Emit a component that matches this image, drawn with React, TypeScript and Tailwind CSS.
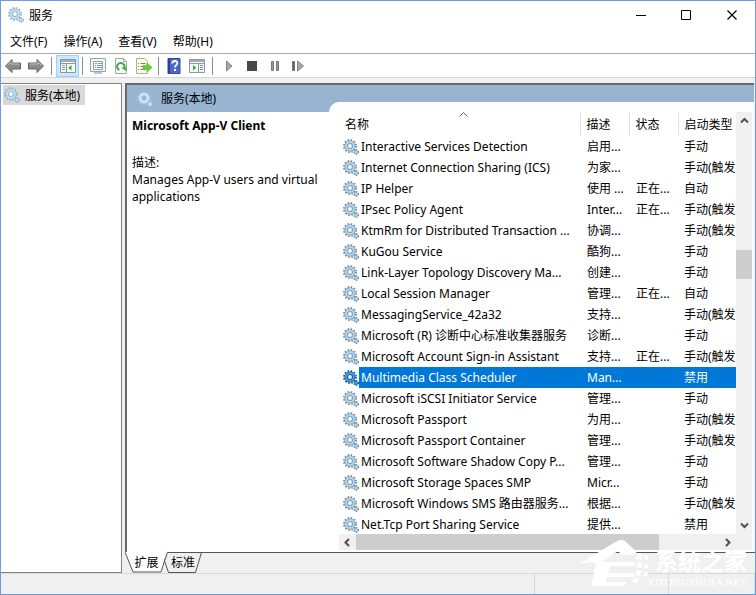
import type { ReactNode } from "react";
import clsx from "clsx";

type Service = {
  name: string;
  description: string;
  status: string;
  startup: string;
  selected?: boolean;
};

const MANUAL = "手动";
const TRIGGER = "手动(触发";
const RUNNING = "正在...";

const services: Service[] = [
  { name: "Interactive Services Detection", description: "启用...", status: "", startup: MANUAL },
  { name: "Internet Connection Sharing (ICS)", description: "为家...", status: "", startup: TRIGGER },
  { name: "IP Helper", description: "使用 ...", status: RUNNING, startup: "自动" },
  { name: "IPsec Policy Agent", description: "Inter...", status: RUNNING, startup: TRIGGER },
  { name: "KtmRm for Distributed Transaction ...", description: "协调...", status: "", startup: TRIGGER },
  { name: "KuGou Service", description: "酷狗...", status: "", startup: MANUAL },
  { name: "Link-Layer Topology Discovery Ma...", description: "创建...", status: "", startup: MANUAL },
  { name: "Local Session Manager", description: "管理...", status: RUNNING, startup: "自动" },
  { name: "MessagingService_42a32", description: "支持...", status: "", startup: TRIGGER },
  { name: "Microsoft (R) 诊断中心标准收集器服务", description: "诊断...", status: "", startup: MANUAL },
  { name: "Microsoft Account Sign-in Assistant", description: "支持...", status: RUNNING, startup: TRIGGER },
  { name: "Multimedia Class Scheduler", description: "Man...", status: "", startup: "禁用", selected: true },
  { name: "Microsoft iSCSI Initiator Service", description: "管理...", status: "", startup: MANUAL },
  { name: "Microsoft Passport", description: "为用...", status: "", startup: TRIGGER },
  { name: "Microsoft Passport Container", description: "管理...", status: "", startup: TRIGGER },
  { name: "Microsoft Software Shadow Copy P...", description: "管理...", status: "", startup: MANUAL },
  { name: "Microsoft Storage Spaces SMP", description: "Micr...", status: "", startup: MANUAL },
  { name: "Microsoft Windows SMS 路由器服务...", description: "根据...", status: "", startup: TRIGGER },
  { name: "Net.Tcp Port Sharing Service", description: "提供...", status: "", startup: "禁用" },
];

const menus = ["文件(F)", "操作(A)", "查看(V)", "帮助(H)"];

/** Big gear with a small one at its lower right */
function Gears({ className, tone = "row" }: { className?: string; tone?: "row" | "selected" | "light" | "header" }) {
  const palette = {
    row: { teeth: "#7292a8", body: "#b9d7e9", hole: "#f4fafd", edge: "#7fa3bb" },
    selected: { teeth: "#1c5c9c", body: "#4f9ad8", hole: "#e6f3fc", edge: "#2266a8" },
    light: { teeth: "#93b8ce", body: "#c9e3f1", hole: "#ffffff", edge: "#90bad2" },
    header: { teeth: "#a9c6dd", body: "#d5e8f4", hole: "#8fb0cf", edge: "#b4d0e3" },
  }[tone];
  return (
    <svg viewBox="0 0 16 16" className={clsx("size-4 shrink-0", className)} aria-hidden="true">
      <circle cx="7" cy="7" r="6" fill="none" stroke={palette.teeth} strokeWidth="2" strokeDasharray="1.570 1.570" />
      <circle cx="7" cy="7" r="5.200" fill={palette.body} stroke={palette.edge} strokeWidth=".8" />
      <circle cx="7" cy="7" r="2.500" fill={palette.hole} stroke={palette.edge} strokeWidth="1.200" />
      <circle cx="13.200" cy="13" r="2.200" fill="none" stroke={palette.teeth} strokeWidth="1.600" strokeDasharray="1.150 1.150" />
      <circle cx="13.200" cy="13" r="1.700" fill={palette.body} stroke={palette.edge} strokeWidth=".7" />
    </svg>
  );
}

function ToolButton({ label, active, children }: { label: string; active?: boolean; children: ReactNode }) {
  return (
    <button
      type="button"
      aria-label={label}
      className={clsx(
        "flex h-[22px] w-[23px] items-center justify-center",
        active && "border border-[#99d1ff] bg-[#cce8ff]"
      )}
    >
      <svg viewBox="0 0 16 16" className="size-4 shrink-0">
        {children}
      </svg>
    </button>
  );
}

function ToolSeparator({ className = "w-[7px]" }: { className?: string }) {
  return (
    <div className={clsx("flex justify-center", className)}>
      <div className="h-[18px] w-px bg-[#8c8c8c]" />
    </div>
  );
}

function Toolbar() {
  return (
    <div className="flex h-6 items-center border-b border-[#d7d7d7] bg-white pt-px">
      <ToolButton label="后退">
        <path d="M.5 8 7 1.500V5h8.500v6H7v3.500z" fill="#8a8a8a" stroke="#626262" />
        <path d="M2.300 7.600 6 3.900V6h8.500" fill="none" stroke="#bdbdbd" />
      </ToolButton>
      <ToolButton label="前进">
        <path d="M15.500 8 9 1.500V5H.5v6H9v3.500z" fill="#8a8a8a" stroke="#626262" />
        <path d="M1.500 6H10V3.900l3.500 3.500" fill="none" stroke="#bdbdbd" />
      </ToolButton>
      <ToolSeparator className="w-[9px]" />
      <ToolButton label="显示/隐藏控制台树" active>
        <path d="M.5 1.500h15v13H.5z" fill="#f6f8f9" stroke="#8d979f" />
        <path d="M1 2h14v2H1z" fill="#a3abb1" />
        <path d="M1 5.500h14M6.500 5v9" stroke="#8d979f" />
        <path d="M2 7.500h3M2 9.500h3M2 11.500h3" stroke="#8a98a4" />
        <path d="M11.500 7v5.500L8.200 9.700z" fill="#3fae30" />
      </ToolButton>
      <ToolSeparator />
      <ToolButton label="属性">
        <path d="M.5.500h15v13H.5z" fill="#f3f5f6" stroke="#9aa3a9" />
        <path d="M3.500 3.500h9v8h-9z" fill="#fff" stroke="#8ba5b8" />
        <path d="M5 5.500h2M8 5.500h4M5 7.500h1M7 7.500h5M5 9.500h1M7 9.500h5" stroke="#7b97ad" />
        <path d="M4 15h8" stroke="#a6cbe2" strokeWidth="2" />
      </ToolButton>
      <ToolButton label="刷新">
        <path d="M2.500.500h8l3 3v12h-11z" fill="#fafafa" stroke="#a5a5a5" />
        <path d="M10.500.500v3h3" fill="none" stroke="#a5a5a5" />
        <path d="M6.300 12A3.700 3.700 0 1 1 11 10.500" fill="none" stroke="#3fa744" strokeWidth="2" />
        <path d="M8 9.500h5.500v3.800z" fill="#3fa744" />
      </ToolButton>
      <ToolButton label="导出列表">
        <path d="M.5.500h8l3 3v12H.5z" fill="#fffbe9" stroke="#b5ac8d" />
        <path d="M2 5.500h1M4.500 5.500h5M2 8.500h1M4.500 8.500h3M2 11.500h1M4.500 11.500h5" stroke="#8a7f66" />
        <path d="M7 7.500h4V5l5 4.500-5 4.500v-2.500H7z" fill="#65cf35" stroke="#4fae2e" strokeWidth=".6" />
      </ToolButton>
      <ToolSeparator />
      <ToolButton label="帮助">
        <path d="M2 .500h12v15H2z" fill="#4a69cb" stroke="#3147a0" />
        <path d="M2 1h2v14H2z" fill="#2b3f96" />
        <path d="M6.300 5.500c0-3.300 5-3.300 5-.3 0 2-2.300 2-2.300 4.300" fill="none" stroke="#fff" strokeWidth="1.800" />
        <path d="M8 11h2v2H8z" fill="#fff" />
      </ToolButton>
      <ToolButton label="显示/隐藏操作窗格">
        <path d="M.5 1.500h15v13H.5z" fill="#f6f8f9" stroke="#8d979f" />
        <path d="M1 2h14v2H1z" fill="#a3abb1" />
        <path d="M1 5.500h14M9.500 5v9" stroke="#8d979f" />
        <path d="M11 7.500h3M11 9.500h3M11 11.500h3" stroke="#6b8fb0" />
        <path d="M4 7v5.500l3.300-2.800z" fill="#3fae30" />
      </ToolButton>
      <ToolSeparator className="w-[9px]" />
      <ToolButton label="启动服务">
        <path d="M5.500 3v10L11 8z" fill="#a8a8a8" stroke="#858585" />
      </ToolButton>
      <ToolButton label="停止服务">
        <path d="M3 3h10v10H3z" fill="#484848" />
      </ToolButton>
      <ToolButton label="暂停服务">
        <path d="M4.500 3.500h2v9h-2zM9.500 3.500h2v9h-2z" fill="#999" stroke="#7a7a7a" />
      </ToolButton>
      <ToolButton label="重新启动服务">
        <path d="M2.500 3.500h2v9h-2z" fill="#666" stroke="#707070" />
        <path d="M7.500 3v10L13.500 8z" fill="#a8a8a8" stroke="#858585" />
      </ToolButton>
    </div>
  );
}

function TitleBar() {
  return (
    <header className="flex h-7 items-center pl-[7px]">
      <Gears tone="light" />
      <h1 className="ml-[5px] flex-1">服务</h1>
      <button type="button" aria-label="最小化" className="flex w-[45px] justify-center">
        <svg viewBox="0 0 11 11" className="size-[11px]" fill="none" stroke="#000">
          <path d="M0 5.500h10" />
        </svg>
      </button>
      <button type="button" aria-label="最大化" className="flex w-[45px] justify-center">
        <svg viewBox="0 0 11 11" className="size-[11px]" fill="none" stroke="#000">
          <path d="M.5.500h9v9h-9z" />
        </svg>
      </button>
      <button type="button" aria-label="关闭" className="flex w-[46px] justify-center">
        <svg viewBox="0 0 11 11" className="size-[11px]" fill="none" stroke="#000" strokeWidth="1.200">
          <path d="M.5.500l9 9M9.500.500l-9 9" />
        </svg>
      </button>
    </header>
  );
}

function ScrollArrow({ label, d, className }: { label: string; d: string; className: string }) {
  return (
    <button type="button" aria-label={label} className={clsx("flex shrink-0 items-center justify-center", className)}>
      <svg viewBox="0 0 9 9" className="size-[9px]" fill="none" stroke="#505050" strokeWidth="2">
        <path d={d} />
      </svg>
    </button>
  );
}

function ServiceTable() {
  return (
    <table className="w-full table-fixed border-collapse">
      <colgroup>
        <col />
        <col className="w-[49px]" />
        <col className="w-[49px]" />
        <col className="w-[58px]" />
      </colgroup>
      <thead>
        <tr className="h-6 text-left">
          <th scope="col" className="relative p-0 pl-[6px] font-normal">
            名称
            <svg
              viewBox="0 0 9 5"
              className="absolute top-0 left-1/2 h-[5px] w-[9px]"
              fill="none"
              stroke="#666"
            >
              <path d="M.5 4.500l4-4 4 4" />
            </svg>
          </th>
          <th scope="col" className="border-l border-[#e2e2e2] p-0 pl-[6px] font-normal">描述</th>
          <th scope="col" className="border-l border-[#e2e2e2] p-0 pl-[6px] font-normal">状态</th>
          <th scope="col" className="border-l border-[#e2e2e2] p-0 pl-[6px] font-normal whitespace-nowrap">启动类型</th>
        </tr>
      </thead>
      <tbody>
        {services.map((s) => (
          <tr key={s.name} className={clsx("h-[21px] whitespace-nowrap", s.selected && "text-white")}>
            <td className="p-0">
              <div className="flex h-[21px] items-center pl-[4px]">
                <Gears tone={s.selected ? "selected" : "row"} />
                <span
                  className={clsx("flex h-[21px] min-w-0 flex-1 items-center pl-[2px]", s.selected && "bg-[#0078d7]")}
                >
                  {s.name}
                </span>
              </div>
            </td>
            <td className={clsx("p-0 pl-[7px]", s.selected && "bg-[#0078d7]")}>{s.description}</td>
            <td className={clsx("p-0 pl-[7px]", s.selected && "bg-[#0078d7]")}>{s.status}</td>
            <td className={clsx("p-0 pl-[6px]", s.selected && "bg-[#0078d7]")}>{s.startup}</td>
          </tr>
        ))}
      </tbody>
    </table>
  );
}

function ViewTabs() {
  return (
    <div className="flex h-[21px] bg-[#f0f0f0]">
      <button type="button" className="relative h-[21px] w-10 pl-[3px]">
        <svg viewBox="0 0 40 21" className="absolute inset-0 h-[21px] w-10">
          <path d="M0 0l8 20h28l6-20z" fill="#fff" />
          <path d="M0 0l8 20h28l4-13" fill="none" stroke="#555" />
        </svg>
        <span className="relative">扩展</span>
      </button>
      <button type="button" className="relative h-[21px] w-9">
        <svg viewBox="0 0 36 21" className="absolute inset-0 h-[21px] w-9 overflow-visible">
          <path d="M36 .500H2.500L-.5 9l4 11.500h27L36.500 .500" fill="none" stroke="#555" />
        </svg>
        <span className="relative">标准</span>
      </button>
      <div className="flex-1 border-t border-[#555]" />
    </div>
  );
}

function Watermark() {
  return (
    <div className="pointer-events-none absolute right-[8px] bottom-[6px] flex items-end text-white">
      <svg viewBox="0 0 74 48" className="-mr-[6px] h-12 w-[74px]" fill="#fff">
        <path d="M0 24L38 1q6-3 10 2l10 9-4 3H43l-4-4-16 11h34l-1 4H31l-2 7h27l-1 4H28l-1 5h21l-3 4H15q-3 0-2-4l4-18-5-2z" />
        <path d="M59 13l5 2-2 5-5-1zM66 15l4 1-1 4-4-1zM59 22l5 1-2 5-5-1zM66 24l4 1-1 4-4-1zM58 30l5 1-2 5-5-1zM65 32l4 1-1 4-4-1zM55 38l5 1-2 4-5-1z" />
      </svg>
      <div className="flex flex-col items-end">
        <span className="text-[23px] leading-[30px] font-bold">系统之家</span>
        <span className="font-['Liberation_Serif',serif] text-[11px] leading-[12px]">XITONGZHIJIA.NET</span>
      </div>
    </div>
  );
}

export default function App() {
  return (
    <div className="relative flex min-h-screen flex-col border border-[#6b9be0] bg-white font-['Noto_Sans','Noto_Sans_CJK_SC',sans-serif] text-[12px] leading-[17px] text-black">
      <TitleBar />
      <nav className="flex h-6 items-center gap-4 px-[9px]">
        {menus.map((m) => (
          <button key={m} type="button">
            {m}
          </button>
        ))}
      </nav>
      <div className="border-t border-[#a8a8a8]">
        <Toolbar />
      </div>

      <div className="flex flex-1 bg-[#f0f0f0] pt-[5px]">
        {/* Console tree */}
        <aside className="w-[121px] shrink-0 border-t border-r border-b border-[#828282] bg-white">
          <button type="button" className="mt-px ml-[2px] flex h-5 items-center bg-[#d9d9d9] pr-[5px] pl-px">
            <Gears tone="light" />
            <span className="ml-[5px]">服务(本地)</span>
          </button>
        </aside>

        <div className="ml-[3px] flex min-w-0 flex-1 flex-col">
          <main className="mr-px flex flex-1 flex-col border-t-2 border-l-2 border-[#696969] bg-white">
            <div className="flex flex-1 bg-[#99b4d1]">
              {/* Details of the service */}
              <section className="flex w-[202px] shrink-0 flex-col">
                <h2 className="flex h-[27px] items-center pl-[10px]">
                  <Gears tone="header" />
                  <span className="ml-[8px]">服务(本地)</span>
                </h2>
                <div className="flex-1 bg-white pt-[5px] pl-[5px]">
                  <h3 className="font-bold">Microsoft App-V Client</h3>
                  <p className="mt-5">描述:</p>
                  <p>Manages App-V users and virtual applications</p>
                </div>
              </section>

              <section className="mt-[17px] flex min-w-0 flex-1 flex-col rounded-tl-[10px] bg-white pt-[10px] pl-[10px]">
                <div className="flex h-[422px]">
                  <div className="min-w-0 flex-1">
                    <ServiceTable />
                  </div>
                  <div className="mr-[2px] flex w-4 flex-col bg-[#f0f0f0]">
                    <ScrollArrow label="向上滚动" className="h-[17px]" d="M1 6.500l3.500-3.500L8 6.500" />
                    <div className="flex-[121]" />
                    <div className="flex-[29] bg-[#cdcdcd]" />
                    <div className="flex-[237]" />
                    <ScrollArrow label="向下滚动" className="h-[17px]" d="M1 2.500L4.500 6 8 2.500" />
                  </div>
                </div>
                <div className="relative mr-[2px] flex h-4 bg-[#f0f0f0] pr-4">
                  <ScrollArrow label="向左滚动" className="w-[17px]" d="M6 1L2.500 4.500 6 8" />
                  <div className="flex-[304] bg-[#cdcdcd]" />
                  <div className="flex-[60]" />
                  <ScrollArrow label="向右滚动" className="w-[17px]" d="M3 1l3.500 3.500L3 8" />
                </div>
              </section>
            </div>
          </main>
          <ViewTabs />
        </div>
      </div>

      <footer className="flex h-[21px] border-t border-[#d9d9d9] bg-[#f0f0f0]">
        <div className="flex-[534] border-r border-[#d9d9d9]" />
        <div className="flex-[133] border-r border-[#d9d9d9]" />
        <div className="flex-[85] border-r border-[#d9d9d9]" />
      </footer>
      <Watermark />
    </div>
  );
}
